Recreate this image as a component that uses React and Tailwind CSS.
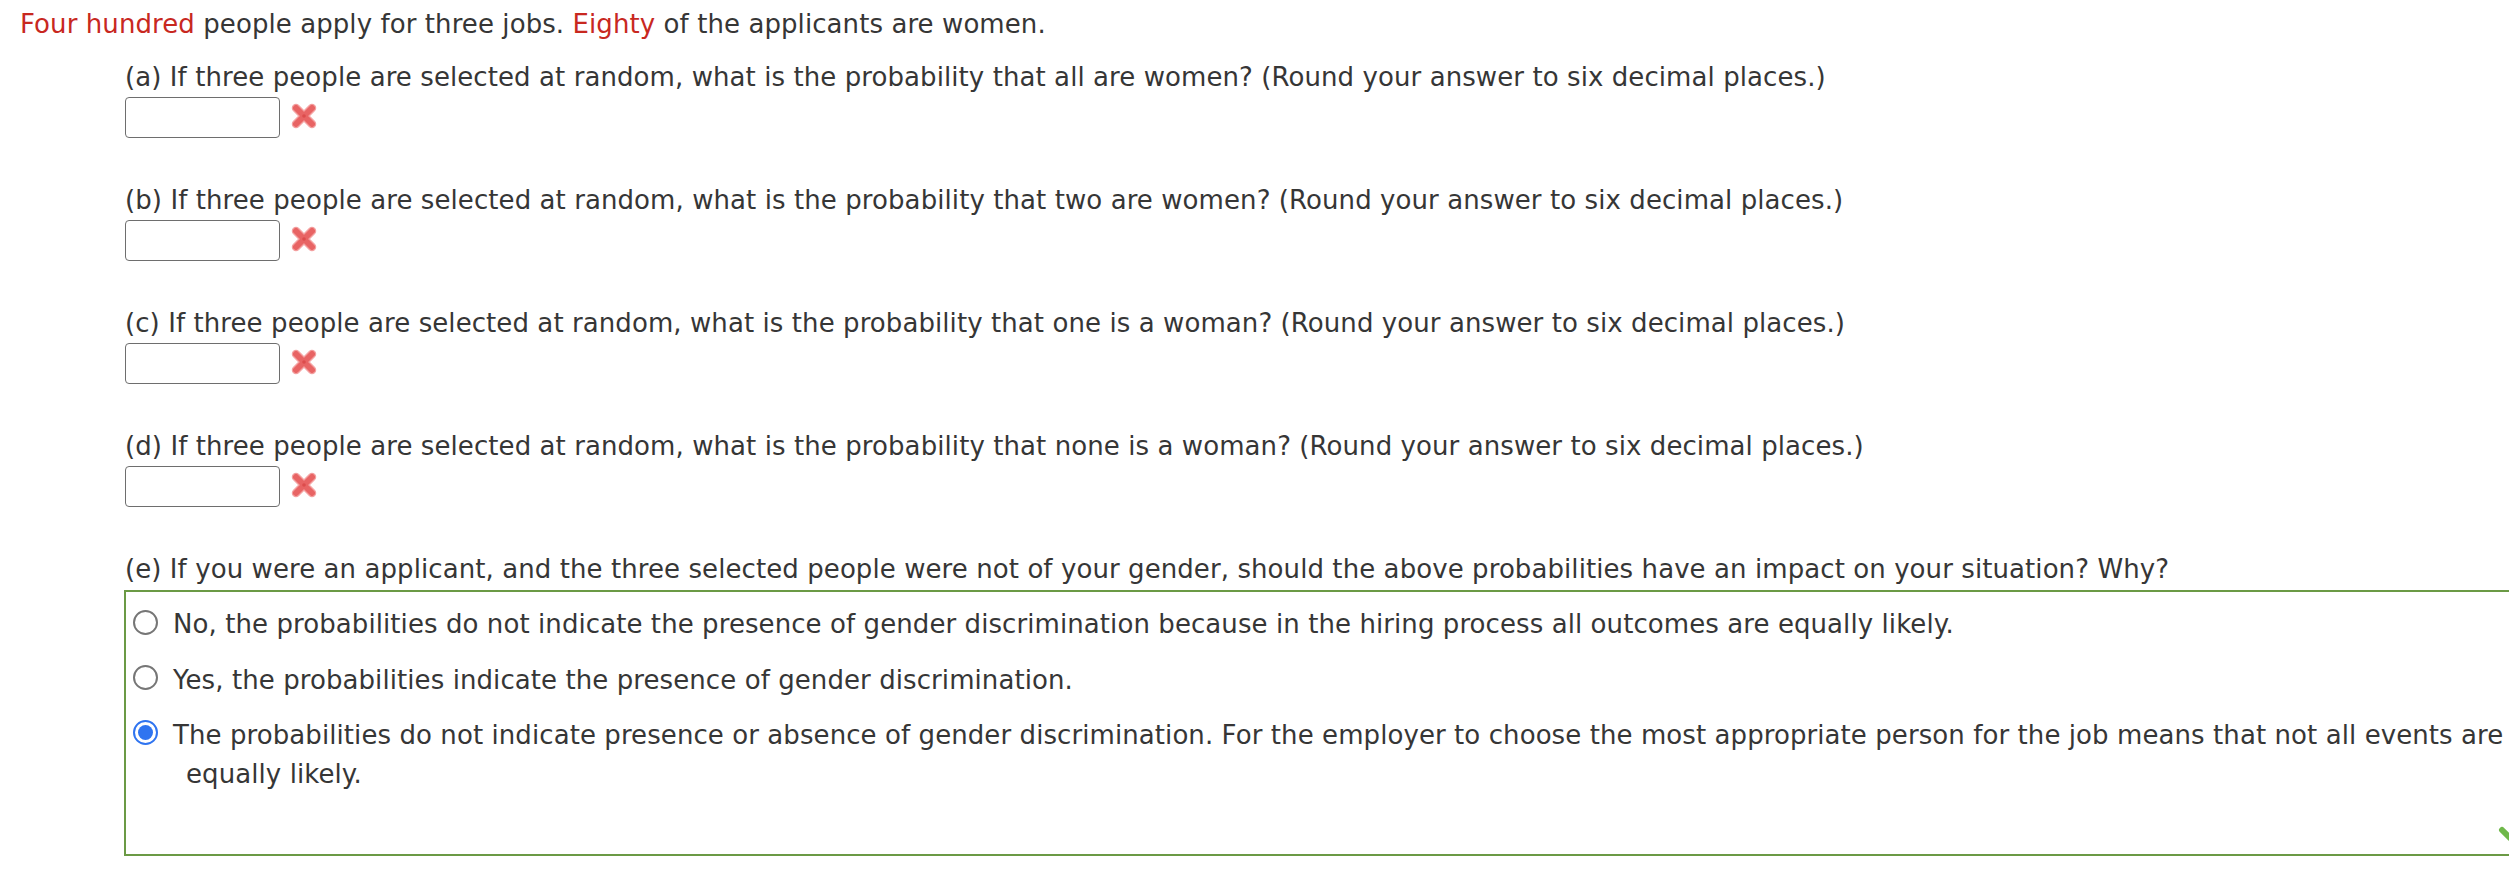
import React from "react";

const font = { fontFamily: '"DejaVu Sans", Verdana, sans-serif' };

function XMark() {
  return (
    <svg width="28" height="28" viewBox="0 0 28 28" className="ml-[10px] mt-[5px] shrink-0">
      <path d="M6 6 L22 22 M22 6 L6 22" stroke="#f4a3a3" strokeWidth="8.5" strokeLinecap="round" />
      <path d="M6 6 L22 22 M22 6 L6 22" stroke="#e86464" strokeWidth="6" strokeLinecap="round" />
      <circle cx="14" cy="14" r="1.8" fill="#dc4c4c" />
    </svg>
  );
}

function Question({ label, text }) {
  return (
    <div className="mb-[43px]">
      <div className="leading-[39px] whitespace-nowrap">
        {label} {text}
      </div>
      <div className="flex items-start">
        <div className="w-[155px] h-[41px] border border-[#6e6e6e] rounded-[4px] bg-white" />
        <XMark />
      </div>
    </div>
  );
}

function Radio({ checked }) {
  if (checked) {
    return (
      <div className="w-[25px] h-[25px] rounded-full border-[2px] border-[#2f74f0] bg-white flex items-center justify-center shrink-0">
        <div className="w-[15px] h-[15px] rounded-full bg-[#2f74f0]" />
      </div>
    );
  }
  return <div className="w-[25px] h-[25px] rounded-full border-[2px] border-[#767676] bg-white shrink-0" />;
}

export default function App() {
  const q = "If three people are selected at random, what is the probability that";
  return (
    <div
      style={font}
      className="w-[2509px] h-[870px] overflow-hidden bg-white text-[#363636] text-[26px] tracking-[0.08px] pt-[5px] pl-[20px]"
    >
      <p className="leading-[39px] whitespace-nowrap">
        <span className="text-[#c8281f]">Four hundred</span> people apply for three jobs.{" "}
        <span className="text-[#c8281f]">Eighty</span> of the applicants are women.
      </p>
      <div className="ml-[105px] mt-[14px]">
        <Question label="(a)" text={`${q} all are women? (Round your answer to six decimal places.)`} />
        <Question label="(b)" text={`${q} two are women? (Round your answer to six decimal places.)`} />
        <Question label="(c)" text={`${q} one is a woman? (Round your answer to six decimal places.)`} />
        <Question label="(d)" text={`${q} none is a woman? (Round your answer to six decimal places.)`} />
        <div className="leading-[39px] whitespace-nowrap">
          (e) If you were an applicant, and the three selected people were not of your gender, should the above
          probabilities have an impact on your situation? Why?
        </div>
        <div className="relative mt-[1px] -ml-[1px] w-[2420px] h-[266px] border-2 border-[#6b9a45] pt-[13px] pl-[7px]">
          <div className="flex items-start">
            <div className="mt-[5px]">
              <Radio />
            </div>
            <div className="ml-[15px] leading-[39px] whitespace-nowrap">
              No, the probabilities do not indicate the presence of gender discrimination because in the hiring
              process all outcomes are equally likely.
            </div>
          </div>
          <div className="flex items-start mt-[17px]">
            <div className="mt-[4px]">
              <Radio />
            </div>
            <div className="ml-[15px] leading-[39px] whitespace-nowrap">
              Yes, the probabilities indicate the presence of gender discrimination.
            </div>
          </div>
          <div className="flex items-start mt-[16px]">
            <div className="mt-[4px]">
              <Radio checked />
            </div>
            <div className="ml-[15px] leading-[39px] whitespace-nowrap">
              <div>
                The probabilities do not indicate presence or absence of gender discrimination. For the employer to
                choose the most appropriate person for the job means that not all events are
              </div>
              <div className="pl-[13px]">equally likely.</div>
            </div>
          </div>
          <svg
            width="30"
            height="30"
            viewBox="0 0 30 30"
            className="absolute left-[2372px] top-[226px]"
          >
            <path d="M4 12 L12 20 L26 4" stroke="#6fb84a" strokeWidth="6" fill="none" strokeLinecap="round" strokeLinejoin="round" />
          </svg>
        </div>
      </div>
    </div>
  );
}
